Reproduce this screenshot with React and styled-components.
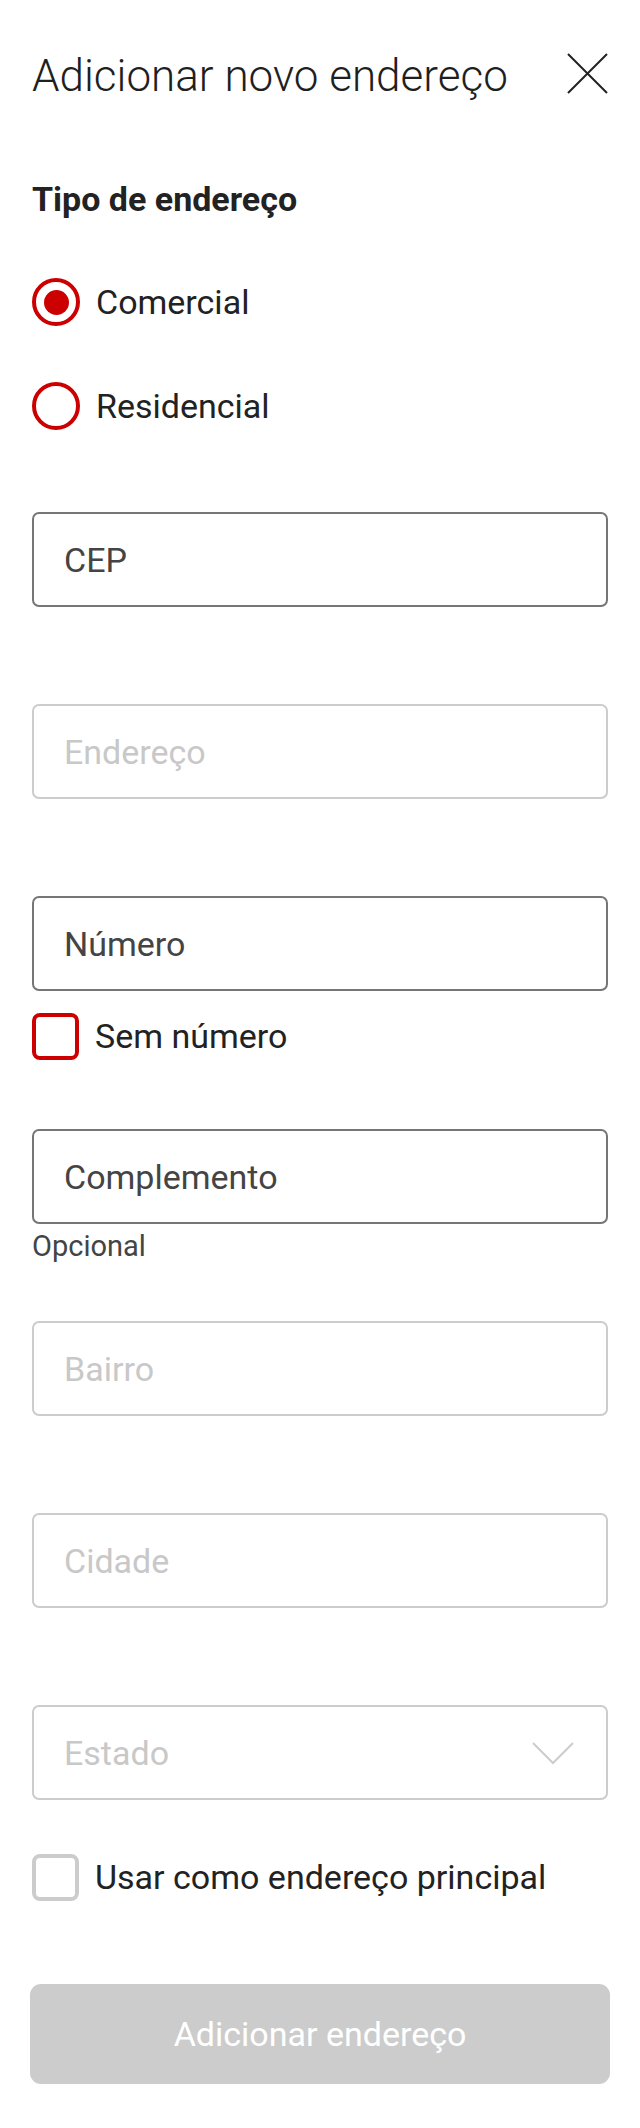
import { createGlobalStyle, styled } from 'styled-components'

const fields = [
    { name: 'cep', label: 'CEP', active: true },
    { name: 'endereco', label: 'Endereço', active: false },
]

const lowerFields = [
    { name: 'bairro', label: 'Bairro' },
    { name: 'cidade', label: 'Cidade' },
]

const CloseIcon = () => (
    <svg width="41" height="41" viewBox="0 0 41 41">
        <path d="M1 1 L40 40 M40 1 L1 40" stroke="#222" strokeWidth="2" fill="none" />
    </svg>
)

const ChevronIcon = () => (
    <svg width="42" height="24" viewBox="0 0 42 24">
        <polyline points="1,2 21,22 41,2" stroke="#cccccc" strokeWidth="2" fill="none" />
    </svg>
)

const App = () => {
    return (
        <>
            <GlobalStyle />
            <PageLayout>

                <Header>
                    <Title>Adicionar novo endereço</Title>
                    <CloseButton aria-label="Fechar">
                        <CloseIcon />
                    </CloseButton>
                </Header>

                <SectionTitle>Tipo de endereço</SectionTitle>

                <RadioGroup>
                    <OptionRow>
                        <RadioMark $checked />
                        Comercial
                    </OptionRow>
                    <OptionRow>
                        <RadioMark />
                        Residencial
                    </OptionRow>
                </RadioGroup>

                <FormLayout>
                    {
                        fields.map((field) =>
                            <FieldGroup key={field.name} $space={59}>
                                <FieldBox $active={field.active}>{field.label}</FieldBox>
                                <Helper />
                            </FieldGroup>
                        )
                    }

                    <FieldGroup $space={69}>
                        <FieldBox $active>Número</FieldBox>
                        <OptionRow $top={21}>
                            <CheckMark $color="#cc0000" />
                            Sem número
                        </OptionRow>
                    </FieldGroup>

                    <FieldGroup $space={59}>
                        <FieldBox $active>Complemento</FieldBox>
                        <Helper>Opcional</Helper>
                    </FieldGroup>

                    {
                        lowerFields.map((field) =>
                            <FieldGroup key={field.name} $space={59}>
                                <FieldBox>{field.label}</FieldBox>
                                <Helper />
                            </FieldGroup>
                        )
                    }

                    <FieldGroup $space={53}>
                        <FieldBox>
                            Estado
                            <ChevronIcon />
                        </FieldBox>
                    </FieldGroup>

                    <OptionRow>
                        <CheckMark $color="#cccccc" />
                        Usar como endereço principal
                    </OptionRow>

                    <SubmitButton disabled>Adicionar endereço</SubmitButton>
                </FormLayout>

            </PageLayout>
        </>
    )
}

// Global

const GlobalStyle = createGlobalStyle`
      * {
        box-sizing: border-box;
      }

      html, body {
        margin: 0;
        padding: 0;
        background: #ffffff;
      }

      body {
        font-family: Roboto, "Liberation Sans", sans-serif;
        color: #222222;
      }
    `

// Components

const Title = styled.h1`
      margin: 0;
      font-size: 44px;
      font-weight: 300;
      line-height: 52px;
      color: #1f1f1f;
    `

const CloseButton = styled.button`
      width: 41px;
      height: 41px;
      margin-top: 3px;
      padding: 0;
      border: none;
      background: none;
      display: flex;
    `

const SectionTitle = styled.h2`
      margin: 77px 0 0;
      font-size: 34px;
      font-weight: 700;
      line-height: 40px;
      color: #222222;
    `

const OptionRow = styled.label`
      display: flex;
      align-items: center;
      gap: 16px;
      margin-top: ${({ $top }) => $top || 0}px;
      font-size: 34px;
      line-height: 48px;
      color: #222222;
    `

const RadioMark = styled.span`
      width: 48px;
      height: 48px;
      flex-shrink: 0;
      border: 4px solid #cc0000;
      border-radius: 50%;
      display: flex;
      align-items: center;
      justify-content: center;

      &::after {
        content: '';
        display: ${({ $checked }) => $checked ? 'block' : 'none'};
        width: 25px;
        height: 25px;
        border-radius: 50%;
        background: #cc0000;
      }
    `

const CheckMark = styled.span`
      width: 47px;
      height: 47px;
      flex-shrink: 0;
      border: 4px solid ${({ $color }) => $color};
      border-radius: 8px;
    `

const FieldBox = styled.div`
      height: 95px;
      padding: 0 32px 0 30px;
      border: 2px solid ${({ $active }) => $active ? '#767676' : '#cccccc'};
      border-radius: 7px;
      display: flex;
      align-items: center;
      justify-content: space-between;
      font-size: 34px;
      color: ${({ $active }) => $active ? '#444444' : '#c8c8c8'};
    `

const Helper = styled.div`
      margin-top: 6px;
      min-height: 32px;
      font-size: 29px;
      line-height: 32px;
      color: #444444;
    `

const SubmitButton = styled.button`
      margin: 83px -2px 0;
      height: 100px;
      border: none;
      border-radius: 11px;
      background: #cccccc;
      color: #ffffff;
      font-family: Roboto, "Liberation Sans", sans-serif;
      font-size: 34px;
    `

// Layouts

const PageLayout = styled.div`
      width: 640px;
      padding: 50px 32px 46px;
      display: flex;
      flex-direction: column;
    `

const Header = styled.div`
      display: flex;
      justify-content: space-between;
      align-items: flex-start;
    `

const RadioGroup = styled.div`
      margin-top: 59px;
      display: flex;
      flex-direction: column;
      gap: 56px;
    `

const FormLayout = styled.div`
      margin-top: 82px;
      display: flex;
      flex-direction: column;
    `

const FieldGroup = styled.div`
      display: flex;
      flex-direction: column;
      margin-bottom: ${({ $space }) => $space}px;
    `

export default App;
